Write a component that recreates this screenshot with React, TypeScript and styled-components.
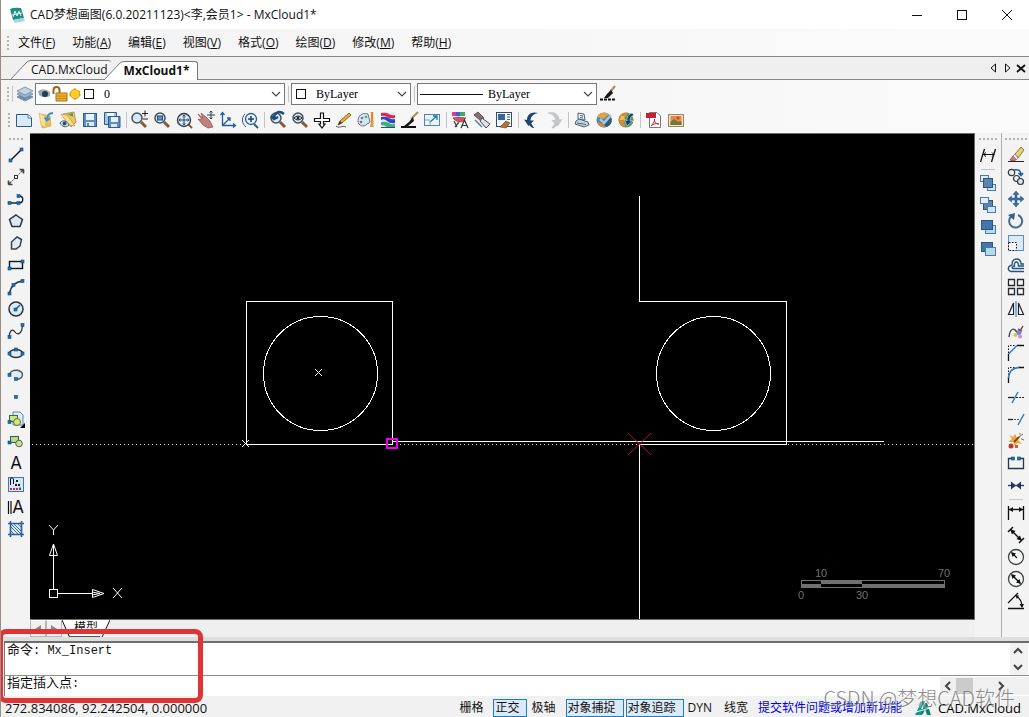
import React from "react";
import styled, { createGlobalStyle, css } from "styled-components";

const UI_FONT = '"Open Sans", "Noto Sans CJK SC", sans-serif';
const CODE_FONT = '"Liberation Mono", "Noto Sans CJK SC", monospace';

const GlobalStyle = createGlobalStyle`
  * { box-sizing: border-box; }
  body { margin: 0; font-family: ${UI_FONT}; font-size: 12px; color: #111; background: #f3f3f3; }
  button, input, select { font: inherit; color: inherit; margin: 0; }
`;

/* ---------- frame ---------- */

const Window = styled.div`
  position: relative;
  display: flex;
  flex-direction: column;
  min-height: 100vh;
  border-left: 1px solid #9c8c88;
  background: #f3f3f3;
  overflow: hidden;
`;

const TitleBar = styled.header`
  display: flex;
  align-items: center;
  height: 29px;
  padding-left: 8px;
  background: #fff;
`;

const Title = styled.h1`
  flex: 1;
  margin: 0 0 2px 5px;
  font-size: 12px;
  font-weight: 400;
  white-space: nowrap;
`;

const WindowButton = styled.button`
  display: flex;
  align-items: center;
  justify-content: center;
  width: 45px;
  height: 28px;
  padding: 0;
  border: 0;
  background: none;
`;

const MenuBar = styled.nav`
  display: flex;
  align-items: center;
  gap: 9px;
  height: 27px;
  padding-left: 6px;
  background: linear-gradient(90deg, #f3f3f3, #fbfbfb);
`;

const MenuList = styled.div`
  display: flex;
  gap: 17px;
`;

const MenuButton = styled.button`
  padding: 0;
  border: 0;
  background: none;
  line-height: 18px;
  white-space: nowrap;
`;

const Grip = styled.span<{ $horizontal?: boolean; $size: number }>`
  flex: none;
  ${(p) =>
    p.$horizontal
      ? css`
          width: ${p.$size}px;
          height: 2px;
          background: repeating-linear-gradient(90deg, #b4b4b4 0 2px, transparent 2px 4px);
        `
      : css`
          width: 2px;
          height: ${p.$size}px;
          background: repeating-linear-gradient(180deg, #b4b4b4 0 2px, transparent 2px 4px);
        `}
`;

/* ---------- document tabs ---------- */

const TabBar = styled.div`
  display: flex;
  align-items: flex-end;
  height: 24px;
  padding-left: 10px;
  border-top: 1px solid #868686;
  border-bottom: 1px solid #868686;
  background: #efefef;
`;

const Tab = styled.button<{ $active?: boolean }>`
  position: relative;
  display: flex;
  height: 19px;
  padding: 0;
  border: 0;
  background: none;
  line-height: 18px;
  white-space: nowrap;
  font-weight: ${(p) => (p.$active ? 700 : 400)};
  margin-left: ${(p) => (p.$active ? "-7px" : "0")};
  margin-bottom: ${(p) => (p.$active ? "-1px" : "0")};
`;

const TabLabel = styled.span<{ $active?: boolean }>`
  height: 100%;
  padding-right: ${(p) => (p.$active ? "8px" : "3px")};
  border-top: 1px solid #777;
  border-right: ${(p) => (p.$active ? "1px solid #777" : "0")};
  border-top-right-radius: 3px;
  background: ${(p) => (p.$active ? "#fff" : "#f4f4f4")};
`;

const TabControls = styled.div`
  display: flex;
  align-items: center;
  align-self: center;
  margin-left: auto;
  margin-right: 1px;
`;

const TinyButton = styled.button`
  display: flex;
  align-items: center;
  justify-content: center;
  width: 14px;
  height: 16px;
  padding: 0;
  border: 0;
  background: none;
`;

/* ---------- tool bars ---------- */

const PropertyBar = styled.div`
  display: flex;
  align-items: center;
  height: 28px;
  padding-left: 6px;
  background: linear-gradient(90deg, #f3f3f3, #fafafa);
`;

const Combo = styled.div<{ $width: number }>`
  position: relative;
  display: flex;
  align-items: center;
  width: ${(p) => p.$width}px;
  height: 22px;
  border: 1px solid #777;
  background: #fff;
`;

const ComboSelect = styled.select<{ $indent: number }>`
  appearance: none;
  width: 100%;
  height: 20px;
  padding: 0 20px 0 ${(p) => p.$indent}px;
  border: 0;
  background: none;
  font-family: "Liberation Serif", serif;
  font-size: 12px;
  color: #000;
`;

const ComboDecor = styled.span`
  position: absolute;
  inset: 0;
  display: flex;
  align-items: center;
  padding: 0 3px 0 1px;
  pointer-events: none;
  svg:last-child { margin-left: auto; }
`;

const ToolBar = styled.div`
  display: flex;
  align-items: center;
  height: 25px;
  padding: 0 0 2px 7px;
  background: linear-gradient(90deg, #f3f3f3, #fafafa);
`;

const ToolColumn = styled.div<{ $width: number; $line?: boolean }>`
  display: flex;
  flex-direction: column;
  align-items: center;
  flex: none;
  width: ${(p) => p.$width}px;
  padding-top: 5px;
  border-left: ${(p) => (p.$line ? "1px solid #b0b0b0" : "0")};
`;

const ToolButton = styled.button`
  display: flex;
  flex: none;
  align-items: center;
  justify-content: center;
  width: 22px;
  height: 22px;
  padding: 0;
  border: 0;
  background: none;
`;

const Divider = styled.span<{ $horizontal?: boolean }>`
  flex: none;
  ${(p) =>
    p.$horizontal
      ? css`width: 14px; height: 6px; background: linear-gradient(#c4c4c4, #c4c4c4) center / 100% 1px no-repeat;`
      : css`width: 6px; height: 16px; background: linear-gradient(#c4c4c4, #c4c4c4) center / 1px 100% no-repeat;`}
`;

const ColumnStart = styled.div`
  display: flex;
  align-items: flex-start;
  height: 6px;
`;

const Workspace = styled.main`
  display: flex;
  flex: 1;
`;

const Center = styled.div`
  display: flex;
  flex: 1;
  flex-direction: column;
  min-width: 0;
`;

const Canvas = styled.svg`
  display: block;
  flex: 1;
  width: 100%;
  min-height: 484px;
  background: #000;
`;

const CanvasFrame = styled.div`
  display: flex;
  flex: 1;
  border: solid #6c6c6c;
  border-width: 1px 1px 1px 0;
`;

const ModelStrip = styled.div`
  display: flex;
  height: 17px;
  background: #efefef;
`;

const ModelArrow = styled.button`
  display: flex;
  align-items: center;
  justify-content: center;
  width: 16px;
  padding: 0;
  border: 1px solid #b5b5b5;
  border-top-color: #fff;
  background: #f0f0f0;
`;

const ModelTab = styled.button`
  display: flex;
  padding: 0;
  border: 0;
  background: none;
  line-height: 16px;
`;

const ModelLabel = styled.span`
  padding: 0 2px 0 4px;
  background: #fff;
  border-bottom: 1px solid #555;
`;

/* ---------- command line ---------- */

const CommandPanel = styled.section`
  position: relative;
  padding-left: 3px;
  border-top: 4px solid #dedede;
  background: #f0f0f0;
  font-family: ${CODE_FONT};
  font-size: 13px;
`;

const History = styled.div`
  display: flex;
  justify-content: space-between;
  height: 35px;
  border-top: 2px solid #6e6e6e;
  border-left: 1px solid #777;
  border-bottom: 1px solid #8e8e8e;
  background: #fff;
`;

const HistoryText = styled.output`
  padding-left: 2px;
  line-height: 15px;
  white-space: pre;
`;

const Latin = styled.span`
  font-size: 12px;
`;

const ScrollColumn = styled.div`
  display: flex;
  flex-direction: column;
  justify-content: space-around;
  width: 18px;
  margin-right: 1px;
  background: #f2f2f2;
`;

const ScrollButton = styled.button`
  display: flex;
  align-items: center;
  justify-content: center;
  width: 16px;
  height: 14px;
  padding: 0;
  border: 0;
  background: none;
`;

const PromptRow = styled.div`
  display: flex;
  align-items: center;
  height: 20px;
  border-left: 1px solid #777;
  background: #fff;
`;

const Prompt = styled.label`
  padding: 0 0 4px 2px;
  line-height: 16px;
  white-space: nowrap;
`;

const PromptInput = styled.input`
  flex: 1;
  min-width: 0;
  height: 18px;
  padding: 0;
  border: 0;
  outline: 0;
  background: none;
`;

const ScrollRow = styled.div`
  display: flex;
  align-items: center;
  width: 89px;
  height: 18px;
  background: #f0f0f0;
`;

const ScrollThumb = styled.span`
  width: 17px;
  height: 16px;
  margin-right: 20px;
  background: #cbcbcb;
`;

const Highlight = styled.div`
  position: absolute;
  left: -3px;
  top: -12px;
  width: 205px;
  height: 74px;
  border: 5px solid #e03434;
  border-radius: 8px;
  pointer-events: none;
`;

/* ---------- status bar ---------- */

const StatusBar = styled.footer`
  display: flex;
  align-items: center;
  height: 21px;
  padding: 3px 8px 0 4px;
  background: #f1f1f1;
`;

const Coordinates = styled.span`
  flex: 1;
  font-size: 13px;
  line-height: 16px;
  white-space: nowrap;
`;

const Toggles = styled.div`
  display: flex;
  gap: 2px;
`;

const Toggle = styled.button<{ $on?: boolean }>`
  height: 18px;
  padding: 0 7px 0 1px;
  border: 1px solid ${(p) => (p.$on ? "#1a7fc8" : "transparent")};
  background: ${(p) => (p.$on ? "#dbeaf6" : "none")};
  line-height: 16px;
  white-space: nowrap;
`;

const FeedbackLink = styled.a`
  margin: 0 13px 0 2px;
  line-height: 16px;
  color: #0000d8;
  text-decoration: none;
  white-space: nowrap;
`;

const Brand = styled.span`
  margin-left: 7px;
  font-size: 13px;
  line-height: 16px;
  color: #000;
`;

const Watermark = styled.div`
  position: absolute;
  right: 14px;
  bottom: 6px;
  font-family: "Noto Sans CJK SC", sans-serif;
  font-size: 20px;
  font-weight: 300;
  line-height: 26px;
  color: rgba(110, 110, 110, 0.8);
  text-shadow: 1px 1px 0 rgba(255, 255, 255, 0.4);
  white-space: nowrap;
  pointer-events: none;
`;

/* ---------- icons ---------- */

const K = "#1c2126";
const B = "#1f5f9f";

const Node = ({ x, y }: { x: number; y: number }) => (
  <rect x={x - 1.5} y={y - 1.5} width="3" height="3" fill="#1c72b8" stroke="#0c4a80" strokeWidth=".6" />
);

const Lens = ({ children, x = 8, y = 8 }: { children?: React.ReactNode; x?: number; y?: number }) => (
  <>
    <path d={`M${x + 4} ${y + 4}L${x + 9} ${y + 9}`} stroke="#8a5a35" strokeWidth="3" />
    <circle cx={x} cy={y} r="5" fill="#d6e9f7" stroke="#44525e" strokeWidth="1.5" />
    {children}
  </>
);

const icons: Record<string, React.ReactNode> = {
  layers: (
    <g stroke="#6a86a3" strokeWidth=".8">
      <path d="M10 9L18 13L10 17L2 13Z" fill="#6f8eae" />
      <path d="M10 6L18 10L10 14L2 10Z" fill="#9db4ca" />
      <path d="M10 3L18 7L10 11L2 7Z" fill="#c4d3e0" />
    </g>
  ),
  newFile: (
    <>
      <path d="M2.500 4.500H14L17.500 8V16.500H2.500Z" fill="#d9ebf9" stroke="#2e5c8a" />
      <path d="M14 4.500V8H17.500" fill="#fff" stroke="#2e5c8a" strokeWidth=".8" />
    </>
  ),
  open: (
    <>
      <path d="M5 4L14 6L15 16L6 18Z" fill="#e9bf58" stroke="#c99d3c" strokeWidth=".6" />
      <path d="M3 3L9 6L10 18L5 15Z" fill="#f8e0a0" stroke="#d4ac50" strokeWidth=".6" />
      <path d="M17 3C12 3 11 6 11 10M8.500 7.500L11 10.500L14 8" stroke="#4090c8" strokeWidth="1.800" fill="none" />
    </>
  ),
  folderView: (
    <>
      <path d="M5 4L16 2L18 12L13 17Z" fill="#edc65a" stroke="#a77d20" strokeWidth=".7" />
      <path d="M3 4L9 5L17 16L11 15Z" fill="#f7df93" stroke="#b18b3b" strokeWidth=".6" />
      <path d="M2 13C5 9 9 11 11 15C8 18 4 17 2 13Z" fill="#e8eef2" stroke="#3b5468" />
      <circle cx="6.500" cy="13.500" r="2" fill="#2d4f6c" />
      <path d="M9 4L15 3L15 7Z" fill="#5ba363" />
    </>
  ),
  save: (
    <>
      <rect x="3.500" y="3.500" width="13" height="13" fill="#5b8fc6" stroke="#2c5b90" />
      <rect x="6" y="4" width="8" height="6" fill="#e8f2fa" />
      <rect x="6" y="12" width="8" height="4" fill="#dce8f2" />
      <path d="M8 13V16" stroke="#35679a" strokeWidth="1.500" />
    </>
  ),
  saveAll: (
    <>
      <path d="M2.500 2.500H14.500V14.500H2.500Z" fill="#a5c4e2" stroke="#2c5b90" />
      <rect x="5" y="3" width="7" height="3" fill="#f4f9fd" />
      <path d="M6.500 6.500H18V17.500H6.500Z" fill="#5b8fc6" stroke="#2c5b90" />
      <rect x="9" y="7" width="7" height="5" fill="#e8f2fa" />
      <rect x="9" y="14" width="6" height="3" fill="#dce8f2" />
    </>
  ),
  zoomRealtime: (
    <Lens x={7}>
      <path d="M12 3.500H18M15 .5V6.500M13 9H18" stroke={K} fill="none" />
    </Lens>
  ),
  zoomWindow: (
    <Lens>
      <rect x="5.500" y="6" width="5" height="4" fill="#5d93c6" stroke="#234f80" />
    </Lens>
  ),
  zoomAll: (
    <>
      <path d="M14 14L18 18" stroke="#8a5a35" strokeWidth="2" />
      <circle cx="10" cy="10" r="6.500" fill="#dcebf7" stroke="#333b44" strokeWidth="1.400" />
      <path d="M10 5V15M5 10H15M8.500 6.500L10 5L11.500 6.500M8.500 13.500L10 15L11.500 13.500M6.500 8.500L5 10L6.500 11.500M13.500 8.500L15 10L13.500 11.500" stroke="#1d4470" fill="none" />
    </>
  ),
  pan: (
    <>
      <path d="M2 4L7 8L5 3L10 7L14 11L17 17L12 18L7 15L2 9L6 10Z" fill="#bf7f7a" stroke="#8c4f4c" strokeWidth=".7" />
      <path d="M15 1V9M11 5H19M13.500 2.500L15 1L16.500 2.500M13.500 7.500L15 9L16.500 7.500" stroke="#263b52" fill="none" />
    </>
  ),
  ucs: (
    <path d="M4.500 3V15.500H17M4.500 15.500L12 8M2.500 5L4.500 2.500L6.500 5M15 13.500L17.500 15.500L15 17.500M12 11V8H9" stroke={B} strokeWidth="1.300" fill="none" />
  ),
  zoomPlus: (
    <>
      <path d="M14 14L18 18" stroke="#2e5c8a" strokeWidth="2" />
      <circle cx="11" cy="9" r="5.500" fill="#e7f1f9" stroke="#2e5c8a" strokeWidth="1.300" />
      <path d="M11 6V12M8 9H14" stroke="#1b3f6b" strokeWidth="1.500" />
      <path d="M5 4C1 8 2 14 6 17" stroke="#2e5c8a" fill="none" />
    </>
  ),
  zoomPrev: (
    <Lens>
      <path d="M16 4C11 0 6 3 6 8M3 6L6 9L10 7" stroke="#214b78" strokeWidth="2.500" fill="none" />
    </Lens>
  ),
  zoomObject: (
    <Lens>
      <path d="M4 8Q8 4 12 8Q8 12 4 8Z" fill="#fff" stroke={K} />
      <circle cx="8" cy="8" r="1.500" fill={K} />
    </Lens>
  ),
  cross: (
    <path d="M8.500 8.500V3H11.500V8.500H17.500V11.500H11.500V14H13L10 18L7 14H8.500V11.500H2.500V8.500Z" fill="#fff" stroke="#111" strokeWidth="1.200" />
  ),
  pencil: (
    <>
      <path d="M4 15L6 11L15 3L17 5L8 13Z" fill="#e7b23a" stroke="#6d4a12" strokeWidth=".8" />
      <path d="M2 16C5 19 8 15 12 17" stroke="#555" fill="none" />
      <path d="M4 15L6 11L8 13Z" fill="#333" />
    </>
  ),
  palette: (
    <>
      <path d="M12 4C6 2 2 6 2 11C2 16 8 17 10 15C11 13 13 14 14 12Z" fill="#d5e4ef" stroke="#5c7c96" />
      <circle cx="6" cy="8" r="1.300" fill="#3f8ed0" />
      <circle cx="10" cy="7" r="1.300" fill="#58ad4d" />
      <circle cx="5" cy="12" r="1.300" fill="#d65244" />
      <path d="M16 2V12" stroke="#e08a2e" strokeWidth="2.500" />
      <path d="M15 11H17.500V17H14Z" fill="#d99a52" />
    </>
  ),
  colors: (
    <>
      <rect x="3" y="2" width="14" height="16" fill="#e4edf6" />
      <path d="M3 3Q8 2 11 4T17 5V8Q12 9 9 7T3 6Z" fill="#e2284a" />
      <path d="M3 7Q8 6 11 8T17 9V13Q12 14 9 11T3 10Z" fill="#2b45d0" />
      <path d="M3 12Q8 11 11 13T17 14V17H9Q6 15 3 15Z" fill="#43b06b" />
      <path d="M3 17.500H17" stroke="#274a92" />
    </>
  ),
  brush: (
    <>
      <path d="M18 2L11 9" stroke="#b08a55" strokeWidth="2" />
      <path d="M13 7L9 12L4 16H8L14 11Z" fill="#171717" />
      <path d="M1 17H16" stroke="#111" strokeWidth="2" />
    </>
  ),
  brushDots: (
    <>
      <path d="M17 2L12 8" stroke="#b08a55" strokeWidth="2" />
      <path d="M13 6L9 10L6 14H10L15 9Z" fill="#171717" />
      <path d="M2 15.500H18" stroke="#111" strokeWidth="2" strokeDasharray="3 1" />
    </>
  ),
  resize: (
    <>
      <rect x="2.500" y="4.500" width="15" height="11" fill="#e9f4fb" stroke="#5484a8" />
      <path d="M8 12L15 6M11 6H15V10" stroke="#1b78b8" strokeWidth="1.300" fill="none" />
      <path d="M3 10H8V15" stroke="#8cacc4" fill="none" />
    </>
  ),
  match: (
    <>
      <rect x="2" y="2" width="4" height="4" fill="#da3c98" />
      <rect x="6" y="2" width="4" height="4" fill="#3a62d0" />
      <rect x="10" y="2" width="5" height="4" fill="#43aa61" />
      <path d="M3 8L8 7L16 8L12 12L6 11Z" fill="#d05656" stroke="#7c2d2d" strokeWidth=".6" />
      <path d="M4 11L7 17M9 12L5 17" stroke="#3a4652" strokeWidth="1.300" />
      <path d="M11 18L14.500 10L18 18M12 15.500H17" stroke="#333" fill="none" strokeWidth="1.200" />
    </>
  ),
  hammer: (
    <>
      <path d="M2 5L6 2L12 8L9 11Z" fill="#8b6f68" stroke="#4a3a38" strokeWidth=".8" />
      <path d="M10 8L18 14L14 18L8 11Z" fill="#dbe2e8" stroke="#434e58" />
      <path d="M3 10L10 17" stroke="#4b79a4" strokeWidth="1.400" />
    </>
  ),
  layout: (
    <>
      <rect x="2.500" y="2.500" width="15" height="14" fill="#f5f9fc" stroke="#2d4e70" />
      <rect x="4" y="4" width="7" height="6" fill="#35679a" />
      <path d="M13 4.500H16M13 7H16M13 9.500H16" stroke="#35679a" />
      <path d="M6 17L12 11L16 13L12 18Z" fill="#b56f32" stroke="#6b3d17" strokeWidth=".6" />
    </>
  ),
  undo: (
    <path d="M16 3C9 1 5 5 5 10L2 9.500L6.500 16L12 10.500L8.500 10.500C8.500 7 11 4 16 3ZM6.500 13C8 17 10 18 12 18L9 13Z" fill="#1c4672" />
  ),
  redo: (
    <path d="M4 3C11 1 15 5 15 10L18 9.500L13.500 16L8 10.500L11.500 10.500C11.500 7 9 4 4 3ZM13.500 13C12 17 10 18 8 18L11 13Z" fill="#c5c9cd" stroke="#b2b6ba" strokeWidth=".5" />
  ),
  print: (
    <g fill="#eef3f7" stroke="#4a627a">
      <path d="M6 3L12 4L13 10L6 9Z" />
      <path d="M4 11L7 9L16 12L17 15L12 17L3 14Z" fill="#c7d3df" />
      <path d="M8 5.500L11 6M8 7.500L11 8M5 13L14 14.500" />
    </g>
  ),
  globe1: (
    <>
      <circle cx="10" cy="10" r="7.500" fill="#3a86bd" />
      <path d="M3 7C5 2 11 2 15 4L10 9L6 8Z" fill="#e0a43c" />
      <path d="M12 17C17 16 19 11 17 7L12 12L9 10L6 13Z" fill="#2e5a78" />
      <path d="M6 9L10 13L17 5" stroke="#a8c6dd" strokeWidth="2.600" fill="none" />
      <path d="M3 12C5 17 10 18 12 17L8 13Z" fill="#d08a3c" />
    </>
  ),
  globe2: (
    <>
      <circle cx="10" cy="10" r="7.500" fill="#4c9a50" />
      <path d="M3 7C5 3 8 2 12 3L8 10L9 17C4 16 2 12 3 7Z" fill="#d38a3c" />
      <path d="M16 3C11 5 11 8 11 11L8 9L11 16L17 11L14 11C14 8 15 6 18 5Z" fill="#173f68" stroke="#e5ecf1" strokeWidth=".6" />
      <path d="M5 6L9 6L7 10L4 10Z" fill="#f1c14c" />
    </>
  ),
  pdf: (
    <>
      <path d="M5.500 2.500H13L16.500 6V17.500H5.500Z" fill="#fff" stroke="#777" />
      <rect x="2" y="3" width="10" height="5" fill="#c8202e" />
      <path d="M7 16C10 13 11 10 10.500 9C10 13 13 14 15 14C12 13 9 14 7 16" stroke="#c8202e" fill="none" />
    </>
  ),
  image: (
    <>
      <rect x="2.500" y="4.500" width="15" height="12" fill="#f1e3c8" stroke="#9c8468" />
      <rect x="4.500" y="6" width="11" height="9" fill="#e98a4a" />
      <path d="M4.500 15V12L8 9L12 12L14 11L15.500 12V15Z" fill="#6d7a38" />
      <circle cx="12" cy="8" r="1.500" fill="#e43a2e" />
    </>
  ),
  line: (
    <>
      <path d="M4.500 15.500L15.500 4.500" stroke="#111" strokeWidth="1.500" />
      <Node x={4.5} y={15.5} />
      <Node x={15.5} y={4.5} />
    </>
  ),
  xline: (
    <>
      <path d="M4 16L16 4" stroke="#555" strokeDasharray="2 1" />
      <path d="M2.500 17.500V13.500M2.500 17.500H6.500M17.500 2.500V6.500M17.500 2.500H13.500" stroke="#444" strokeWidth="1.600" />
      <path d="M2.500 17.500L5 15M17.500 2.500L15 5" stroke="#444" strokeWidth="1.600" />
      <rect x="8.500" y="8.500" width="3" height="3" fill="#fff" stroke="#333" />
    </>
  ),
  polyline: (
    <>
      <path d="M3 14H13C18 14 18 7 13 7" stroke="#222" strokeWidth="1.400" fill="none" />
      <Node x={3.5} y={14} />
      <Node x={12.5} y={14} />
      <Node x={12.5} y={7} />
    </>
  ),
  polygon: <path d="M10 4L16.500 8.500L14 15.500H6L3.500 8.500Z" fill="#dce8f0" stroke="#2b333a" strokeWidth="1.500" />,
  freePolygon: <path d="M11 4L15.500 6.500L14 13L10 16H5.500V9Z" fill="#e4ebef" stroke="#3c444b" strokeWidth="1.500" />,
  rect: (
    <>
      <rect x="3.500" y="6.500" width="13" height="7" fill="#e4edf5" stroke="#151515" strokeWidth="1.400" />
      <Node x={3.5} y={13.5} />
      <Node x={16.5} y={6.5} />
    </>
  ),
  arc: (
    <>
      <path d="M3.500 17Q5 5 17 4" stroke="#333" strokeWidth="1.300" fill="none" />
      <Node x={3.5} y={16.5} />
      <Node x={7.5} y={8} />
      <Node x={16.5} y={4} />
    </>
  ),
  circle: (
    <>
      <circle cx="10" cy="10" r="7" fill="#dcebf4" stroke="#2b3238" strokeWidth="1.500" />
      <path d="M10 10L14 6" stroke={B} strokeWidth="1.500" />
      <Node x={9.5} y={10.5} />
    </>
  ),
  spline: (
    <>
      <path d="M3 16C4 8 7 8 9 11S16 14 16.500 4" stroke="#333" strokeWidth="1.300" fill="none" />
      <Node x={3.5} y={16} />
      <Node x={16.5} y={4} />
    </>
  ),
  ellipse: (
    <>
      <ellipse cx="10" cy="10.500" rx="6.500" ry="4" fill="#dfeaf2" stroke="#2e373f" strokeWidth="1.500" />
      <Node x={3.5} y={10.5} />
      <Node x={16.5} y={10.5} />
      <Node x={10} y={6.5} />
    </>
  ),
  ellipseArc: (
    <>
      <path d="M3.500 10C4 3.500 17 4 16.500 10C16 14 12 14.500 10 14" fill="#dfeaf2" stroke="#4a545d" strokeWidth="1.400" />
      <Node x={3.5} y={10} />
      <Node x={10} y={14} />
    </>
  ),
  point: <Node x={10} y={10} />,
  block: (
    <>
      <path d="M7 3H14L17 6V16H7Z" fill="#dcebf7" stroke="#5b86b0" />
      <rect x="3.500" y="6.500" width="8" height="6" fill="#cbe58b" stroke="#416a3a" />
      <circle cx="11" cy="13" r="3.500" fill="#d6e87a" stroke="#5d7434" />
      <Node x={3.5} y={13} />
      <path d="M19 14V19H14Z" fill="#000" />
    </>
  ),
  insert: (
    <>
      <rect x="4.500" y="5.500" width="8" height="6" fill="#bcd992" stroke="#39603a" />
      <circle cx="13" cy="12.500" r="3.300" fill="#c9dda3" stroke="#4e6a3b" />
      <Node x={3.5} y={11.5} />
    </>
  ),
  mtext: <text x="10" y="16" textAnchor="middle" fontFamily="Inter, sans-serif" fontSize="17" fill="#111">A</text>,
  attribute: (
    <>
      <rect x="2.500" y="2.500" width="15" height="14" fill="#d6e6f4" stroke="#4275a5" />
      <path d="M4.500 10V3.500Q7.500 2 7.500 5V9" stroke="#111" fill="none" />
      <path d="M10 5h2v2h-2zM9 9h2v2h-2zM12 9h2v2h-2z" fill="#222" />
      <path d="M4 13h2v2h-2zM7 13h2v2h-2zM10 13h2v2h-2z" fill="#d3264a" />
      <path d="M13 12.500h2v2.500h-2z" fill="#315c92" />
    </>
  ),
  attText: (
    <>
      <path d="M2.500 4V17M5 4V17" stroke="#111" strokeWidth="1.200" />
      <text x="12" y="16" textAnchor="middle" fontFamily="Inter, sans-serif" fontSize="17" fill="#111">A</text>
    </>
  ),
  hatch: (
    <>
      <rect x="5" y="5" width="10" height="10" fill="#dceafa" />
      <path d="M5 8L12 15M5 12L8 15M8 5L15 12M12 5L15 8M5 5L15 15" stroke="#3a6da2" />
      <path d="M4.500 2V18M15.500 2V18M2 4.500H18M2 15.500H18" stroke="#2c6096" strokeWidth="1.600" />
    </>
  ),
  dimEdit: (
    <>
      <path d="M6.500 4L2.500 17M17.500 4L13.500 17" stroke="#111" strokeWidth="1.300" />
      <path d="M5 9.500H16M8 7.500L5.500 9.500L8 11.500M14 7.500L16 9.500L14 11.500" stroke="#111" fill="none" />
    </>
  ),
  erase: (
    <>
      <path d="M2 16.500H18" stroke="#222" />
      <path d="M9 9L15 2L18 5L12 13Z" fill="#ecd16a" stroke="#6e5b20" strokeWidth=".8" />
      <path d="M7 11L11 14L8 16L4 15Z" fill="#e2747b" stroke="#8c3b43" strokeWidth=".8" />
      <path d="M9 9L12 13L10.500 14.500L7 11Z" fill="#eef3f6" stroke="#667" strokeWidth=".6" />
    </>
  ),
  copy: (
    <>
      <circle cx="5.500" cy="5.500" r="3.200" fill="#e9eef2" stroke="#30373e" strokeWidth="1.200" />
      <circle cx="10.500" cy="11.500" r="3" fill="#e9eef2" stroke="#30373e" strokeWidth="1.200" />
      <circle cx="14.500" cy="14.500" r="3" fill="#dfe6ec" stroke="#30373e" strokeWidth="1.200" />
      <path d="M8 3C13 2 15 4 15 8M12.500 6L15 8.500L17 6" stroke={B} strokeWidth="1.600" fill="none" />
    </>
  ),
  move: (
    <path d="M10 2L13 5.500H11V9H14.500V7L18 10L14.500 13V11H11V14.500H13L10 18L7 14.500H9V11H5.500V13L2 10L5.500 7V9H9V5.500H7Z" fill="#386fa5" stroke="#28507a" strokeWidth=".5" />
  ),
  rotate: (
    <>
      <path d="M12 4A6.500 6.500 0 1 1 5 5.500" stroke="#456b91" strokeWidth="2" fill="none" />
      <path d="M2 4L9 2L8 9Z" fill="#2f608f" />
    </>
  ),
  scale: (
    <>
      <rect x="2.500" y="2.500" width="15" height="15" fill="#dceaf8" stroke="#5b8fc4" />
      <path d="M3 9.500H10.500V17M2.500 9.500V17.500H10.500" stroke="#111" strokeDasharray="1.500 1.500" fill="#f4f8fc" />
    </>
  ),
  offset: (
    <path d="M18 16.500H5Q1 15.500 3 11.500L6 10Q6 4 10.500 4Q15 4 15 9H18M18 13.500H7Q5 12.500 8.500 11Q8 7 10.500 7Q12.500 7 12.500 11H18" stroke="#25557e" strokeWidth="1.400" fill="none" />
  ),
  array: (
    <path d="M2.500 2.500H8.500V8.500H2.500ZM11.500 2.500H17.500V8.500H11.500ZM2.500 11.500H8.500V17.500H2.500ZM11.500 11.500H17.500V17.500H11.500Z" fill="#f7fafc" stroke="#252b30" strokeWidth="1.300" />
  ),
  mirror: (
    <>
      <path d="M7.500 4V15.500H2.500Z" fill="#fff" stroke="#222" strokeWidth="1.200" />
      <path d="M12.500 4V15.500H17.500Z" fill="#fff" stroke="#222" strokeWidth="1.200" />
      <path d="M10 2V18" stroke="#3685c4" strokeWidth="1.200" />
    </>
  ),
  editSpline: (
    <>
      <path d="M3 16C4 7 8 7 10 10S14 10 17 5" stroke="#444" strokeWidth="1.400" fill="none" />
      <circle cx="9.500" cy="14" r="2" fill="#e9c23d" />
      <circle cx="13" cy="11.500" r="2.500" fill="#5d8fe0" />
      <circle cx="14" cy="15.500" r="2" fill="#d98bd0" />
      <path d="M12 8L16 10" stroke="#c23c3c" strokeWidth="1.500" />
    </>
  ),
  chamfer: (
    <>
      <path d="M2.500 10V2.500H10" stroke="#111" strokeDasharray="1.500 1.500" fill="none" />
      <path d="M2.500 18V11M11 2.500H18" stroke="#111" strokeWidth="1.300" />
      <path d="M2.500 11L11 2.500" stroke="#327bc0" strokeWidth="1.500" />
    </>
  ),
  fillet: (
    <>
      <path d="M2.500 10V2.500H10" stroke="#111" strokeDasharray="1.500 1.500" fill="none" />
      <path d="M2.500 18V12M12 2.500H18" stroke="#111" strokeWidth="1.300" />
      <path d="M2.500 13Q3 3 13 2.500" stroke="#327bc0" strokeWidth="1.600" fill="none" />
    </>
  ),
  trim: (
    <>
      <path d="M2 10.500H8" stroke="#222" strokeWidth="1.300" />
      <path d="M10 10.500H18" stroke="#222" strokeDasharray="2 1" />
      <path d="M6 16L12 5" stroke="#2b7fc1" strokeWidth="1.500" />
    </>
  ),
  extend: (
    <>
      <path d="M2 10.500H7" stroke="#222" strokeWidth="1.300" />
      <path d="M8 10.500H14" stroke="#2b5f93" strokeDasharray="2 1" />
      <path d="M12 16L18 5" stroke="#2b7fc1" strokeWidth="1.500" />
    </>
  ),
  explode: (
    <>
      <path d="M3 4L7 6L9 3L11 7L15 5L12 9L16 13L11 12L9 15L7 11L2 11L6 8Z" fill="#e5aa3b" />
      <circle cx="5" cy="15" r="2.500" fill="#c92e2e" />
      <path d="M8 11L13 6" stroke="#92362c" strokeWidth="1.800" />
      <path d="M13 6L17 3M15 8L18 9M14 4V2" stroke="#777" />
      <path d="M9 14H12V17H9Z" fill="#dc5a32" />
    </>
  ),
  breakAt: (
    <>
      <path d="M6 5.500H2.500V15.500H17.500V5.500H14" fill="none" stroke="#26394b" strokeWidth="1.300" />
      <Node x={7} y={5.5} />
      <Node x={13} y={5.5} />
    </>
  ),
  join: (
    <>
      <path d="M2 10.500H18" stroke="#1f3958" strokeWidth="1.300" />
      <path d="M5 6.500L10 10.500L5 14.500ZM15 6.500L10 10.500L15 14.500Z" fill="#1f3958" />
    </>
  ),
  dimLinear: (
    <>
      <path d="M2.500 3V17M17.500 3V17" stroke="#111" strokeWidth="1.300" />
      <path d="M3 6.500H17" stroke="#111" strokeWidth="1.400" />
      <path d="M3 6.500L7 4V9ZM17 6.500L13 4V9Z" fill="#111" />
    </>
  ),
  dimAligned: (
    <>
      <path d="M2 7L7 2M13 18L18 13" stroke="#111" strokeWidth="1.500" />
      <path d="M5 5L15 15" stroke="#111" strokeWidth="1.300" />
      <path d="M4 4L9.500 6L6 9.500ZM16 16L10.500 14L14 10.500Z" fill="#111" />
    </>
  ),
  dimRadius: (
    <>
      <circle cx="10" cy="10" r="7.500" fill="#f5f7f8" stroke="#444" strokeWidth="1.300" />
      <path d="M6 6L11 11" stroke="#111" strokeWidth="1.300" />
      <path d="M5 5L10 6.500L6.500 10Z" fill="#111" />
    </>
  ),
  dimDiameter: (
    <>
      <circle cx="10" cy="10" r="7.500" fill="#f5f7f8" stroke="#444" strokeWidth="1.300" />
      <path d="M6 6L14 14" stroke="#111" strokeWidth="1.300" />
      <path d="M5 5L10 6.500L6.500 10ZM15 15L10 13.500L13.500 10Z" fill="#111" />
    </>
  ),
  dimAngle: (
    <>
      <path d="M2 17.500H18" stroke="#111" strokeWidth="1.500" />
      <path d="M2 12L12 2" stroke="#111" strokeWidth="1.200" />
      <path d="M10 5Q16 8 16 16" stroke="#111" strokeWidth="1.200" fill="none" />
      <path d="M9 4L13 4.500L11 8ZM16 17L13.500 13H18Z" fill="#111" />
    </>
  ),
};

const orderIcon = (front: number) => {
  const back = <rect key="b" x="2.500" y="2.500" width="8" height="6" fill="#e4edf6" stroke="#4a7cab" />;
  const low = <rect key="l" x="9.500" y="11.500" width="8" height="6" fill="#cfe6f2" stroke="#4a7cab" />;
  const mid = <rect key="m" x="5.500" y="5.500" width="9" height="9" fill="#5a85b3" stroke="#2a5682" />;
  const big = <rect key="g" x="3.500" y="3.500" width="11" height="9" fill="#4576a9" stroke="#2a5682" />;
  const small = <rect key="s" x="7.500" y="8.500" width="10" height="8" fill="#b9d9ea" stroke="#4a7cab" />;
  return [[back, low, mid], [mid, back, low], [small, big], [big, small]][front];
};
icons.orderFront = orderIcon(0);
icons.orderBack = orderIcon(1);
icons.orderAbove = orderIcon(2);
icons.orderUnder = orderIcon(3);

const Icon = ({ name }: { name: string }) => (
  <svg width="20" height="20" viewBox="0 0 20 20" fill="none" aria-hidden="true">
    {icons[name]}
  </svg>
);

const Tool = ({ name }: { name: string }) => (
  <ToolButton type="button" aria-label={name}>
    <Icon name={name} />
  </ToolButton>
);

const Chevron = ({ dir, size = 10, bold }: { dir: "up" | "down" | "left" | "right"; size?: number; bold?: boolean }) => {
  const d = { down: "M1 3L5 7L9 3", up: "M1 7L5 3L9 7", left: "M7 1L3 5L7 9", right: "M3 1L7 5L3 9" }[dir];
  return (
    <svg width={size} height={size} viewBox="0 0 10 10" fill="none" aria-hidden="true">
      <path d={d} stroke="#444" strokeWidth={bold ? 2 : 1.1} />
    </svg>
  );
};

const Logo = ({ boxed }: { boxed?: boolean }) => (
  <svg width="16" height="16" viewBox="0 0 16 16" aria-hidden="true">
    {boxed ? (
      <>
        <path d="M1 2Q5 0 12 1L15 11L4 13Z" fill="#1d8f84" />
        <path d="M4 13L15 11L16 14L6 16Z" fill="#a9d3ea" />
        <path d="M4 10L6 4L8 9L10 4L12 9M3 8L13 6" stroke="#d9f2ee" fill="none" />
      </>
    ) : (
      <>
        <path d="M7 1L10 1L6 9H9L7 15H0L3 9Z" fill="#11988a" />
        <path d="M10 3L12 3L16 15H12L10 9L8 14H6Z" fill="#0c8175" />
        <path d="M1 12L15 8" stroke="#e6f7f3" />
      </>
    )}
  </svg>
);

/* ---------- data ---------- */

const menus = [
  ["文件", "F"], ["功能", "A"], ["编辑", "E"], ["视图", "V"],
  ["格式", "O"], ["绘图", "D"], ["修改", "M"], ["帮助", "H"],
];

const mainTools = [
  ["newFile", "open", "folderView", "save", "saveAll"],
  ["zoomRealtime", "zoomWindow", "zoomAll", "pan", "ucs", "zoomPlus"],
  ["zoomPrev", "zoomObject", "cross", "pencil", "palette", "colors", "brush", "resize"],
  ["match", "hammer", "layout"],
  ["undo", "redo"],
  ["print", "globe1", "globe2"],
  ["pdf", "image"],
];

const drawTools = [
  "line", "xline", "polyline", "polygon", "freePolygon", "rect", "arc", "circle", "spline",
  "ellipse", "ellipseArc", "point", "block", "insert", "mtext", "attribute", "attText", "hatch",
];

const orderTools = ["orderFront", "orderBack", "orderAbove", "orderUnder"];

const modifyTools = [
  "erase", "copy", "move", "rotate", "scale", "offset", "array", "mirror", "editSpline",
  "chamfer", "fillet", "trim", "extend", "explode", "breakAt", "join",
];

const dimTools = ["dimLinear", "dimAligned", "dimRadius", "dimDiameter", "dimAngle"];

const toggles: [string, boolean][] = [
  ["栅格", false], ["正交", true], ["极轴", false], ["对象捕捉", true],
  ["对象追踪", true], ["DYN", false], ["线宽", false],
];

/* ---------- sections ---------- */

const TabSlant = ({ fill }: { fill: string }) => (
  <svg width="20" height="19" viewBox="0 0 20 19" aria-hidden="true">
    <path d="M0 19L15 3Q17 .5 20 .5V19Z" fill={fill} />
    <path d="M0 19L15 3Q17 .5 20 .5" fill="none" stroke="#777" />
  </svg>
);

const Drawing = () => (
  <CanvasFrame>
    <Canvas role="img" aria-label="drawing">
      <line x1="2" x2="100%" y1="310.500" y2="310.500" stroke="#ddd" strokeDasharray="1 3" />
      <g stroke="#fff" fill="none" shapeRendering="crispEdges">
        <rect x="216.500" y="167.500" width="146" height="143" />
        <circle cx="290.500" cy="239.500" r="57" />
        <path d="M609.500 62V167.500H756.500V310.500H609.500" />
        <circle cx="683.500" cy="239.500" r="57" />
        <path d="M362 307.500H854" />
        <line x1="609.500" x2="609.500" y1="310" y2="100%" />
        <path d="M23.500 422V455M28 459.500H62" />
        <rect x="19.500" y="455.500" width="8" height="8" />
      </g>
      <g stroke="#fff" fill="none">
        <path d="M285 235L292 242M292 235L285 242M212 306L219 313M219 306L212 313" />
        <path d="M23.500 410L27.500 421.500H19.500ZM23.500 410V421M62.500 455.500V463.500L74 459.500ZM62 458L70 459.500L62 461" />
        <path d="M83 454L92 464M92 454L83 464M19 391L23.500 396L28 391M23.500 396V401" />
      </g>
      <path d="M598 299L621 321M621 299L598 321" stroke="#c01818" />
      <rect x="357" y="305" width="10" height="9" fill="none" stroke="#f000f0" strokeWidth="2" />
      <g shapeRendering="crispEdges">
        <rect x="771.500" y="446.500" width="143" height="7" fill="none" stroke="#707070" />
        <path d="M771 450H791V454H771ZM791 446H832V450H791ZM832 450H915V454H832Z" fill="#707070" />
      </g>
      <g fill="#707070" fontFamily='"Liberation Sans", sans-serif' fontSize="11" textAnchor="middle">
        <text x="791" y="443">10</text>
        <text x="914" y="443">70</text>
        <text x="771" y="465">0</text>
        <text x="832" y="465">30</text>
      </g>
    </Canvas>
  </CanvasFrame>
);

const ComboBox = ({ label, value, width, indent, children }: {
  label: string; value: string; width: number; indent: number; children: React.ReactNode;
}) => (
  <Combo $width={width}>
    <ComboSelect aria-label={label} $indent={indent} defaultValue={value}>
      <option value={value}>{value}</option>
    </ComboSelect>
    <ComboDecor>
      {children}
      <Chevron dir="down" />
    </ComboDecor>
  </Combo>
);

export default function App() {
  return (
    <>
      <GlobalStyle />
      <Window>
        <TitleBar>
          <Logo boxed />
          <Title>CAD梦想画图(6.0.20211123)&lt;李,会员1&gt; - MxCloud1*</Title>
          <WindowButton type="button" aria-label="Minimize">
            <svg width="12" height="12"><path d="M1 6.500H11" stroke="#111" /></svg>
          </WindowButton>
          <WindowButton type="button" aria-label="Maximize">
            <svg width="12" height="12"><rect x="1.500" y="1.500" width="9" height="9" fill="none" stroke="#111" /></svg>
          </WindowButton>
          <WindowButton type="button" aria-label="Close">
            <svg width="12" height="12"><path d="M1 1L11 11M11 1L1 11" stroke="#111" /></svg>
          </WindowButton>
        </TitleBar>

        <MenuBar>
          <Grip $size={14} />
          <MenuList>
            {menus.map(([text, key]) => (
              <MenuButton type="button" key={key}>
                {text}(<u>{key}</u>)
              </MenuButton>
            ))}
          </MenuList>
        </MenuBar>

        <TabBar>
          <Tab type="button">
            <TabSlant fill="#f4f4f4" />
            <TabLabel>CAD.MxCloud</TabLabel>
          </Tab>
          <Tab type="button" $active>
            <TabSlant fill="#fff" />
            <TabLabel $active>MxCloud1*</TabLabel>
          </Tab>
          <TabControls>
            <TinyButton type="button" aria-label="Previous tab">
              <svg width="10" height="10"><path d="M7.500 1V9L3 5Z" fill="none" stroke="#111" /></svg>
            </TinyButton>
            <TinyButton type="button" aria-label="Next tab">
              <svg width="10" height="10"><path d="M3.500 1V9L8 5Z" fill="none" stroke="#111" /></svg>
            </TinyButton>
            <TinyButton type="button" aria-label="Close tab">
              <svg width="10" height="10"><path d="M1 2L9 9M9 2L1 9" stroke="#111" strokeWidth="1.800" /></svg>
            </TinyButton>
          </TabControls>
        </TabBar>

        <PropertyBar>
          <Grip $size={14} />
          <Divider />
          <Icon name="layers" />
          <ComboBox label="Layer" value="0" width={250} indent={68}>
            <svg width="62" height="18" viewBox="0 0 62 18" aria-hidden="true">
              <path d="M1 6Q7 2 13 7L13 11Q6 14 2 10Z" fill="#9aa9b5" />
              <circle cx="8" cy="9" r="3" fill="#223d58" />
              <path d="M16.500 9V5Q16.500 2 19.500 2T22.500 5V8" fill="none" stroke="#8d6a1f" strokeWidth="2" />
              <path d="M19 8H30V16H19Z" fill="#f0b02e" stroke="#a77518" />
              <path d="M19 11H30M19 13.500H30" stroke="#a77518" strokeWidth=".7" />
              <path d="M38 3L40 5L43 6L43 9L44 10L41 13L38 15L35 13L32 10L33 7L35 5Z" fill="#e89c17" />
              <circle cx="38" cy="9" r="4" fill="#ffd028" />
              <rect x="47.500" y="4.500" width="9" height="9" fill="#fff" stroke="#111" />
            </svg>
          </ComboBox>
          <Divider />
          <ComboBox label="Color" value="ByLayer" width={120} indent={24}>
            <svg width="16" height="18" aria-hidden="true"><rect x="3.500" y="4.500" width="9" height="9" fill="#fff" stroke="#111" /></svg>
          </ComboBox>
          <Divider />
          <ComboBox label="Linetype" value="ByLayer" width={180} indent={70}>
            <svg width="65" height="18" aria-hidden="true"><path d="M1 9.500H64" stroke="#111" /></svg>
          </ComboBox>
          <Tool name="brushDots" />
        </PropertyBar>

        <ToolBar>
          <Grip $size={14} />
          <span>&nbsp;</span>
          {mainTools.map((group, i) => (
            <React.Fragment key={i}>
              {i > 0 && <Divider />}
              {group.map((name) => <Tool key={name} name={name} />)}
            </React.Fragment>
          ))}
        </ToolBar>

        <Workspace>
          <ToolColumn $width={29}>
            <ColumnStart><Grip $horizontal $size={14} /></ColumnStart>
            {drawTools.map((name) => <Tool key={name} name={name} />)}
          </ToolColumn>
          <Center>
            <Drawing />
            <ModelStrip>
              <ModelArrow type="button" aria-label="Scroll left">
                <svg width="8" height="10"><path d="M7 1V9L1 5Z" fill="#888" /></svg>
              </ModelArrow>
              <ModelArrow type="button" aria-label="Scroll right">
                <svg width="8" height="10"><path d="M1 1V9L7 5Z" fill="#888" /></svg>
              </ModelArrow>
              <ModelTab type="button">
                <svg width="8" height="17"><path d="M0 0L8 17V0Z" fill="#fff" /><path d="M0 0L7.500 17" stroke="#111" /></svg>
                <ModelLabel>模型</ModelLabel>
                <svg width="10" height="17"><path d="M10 0L2 17H0V0Z" fill="#fff" /><path d="M10 0L2 17" stroke="#111" /></svg>
              </ModelTab>
            </ModelStrip>
          </Center>
          <ToolColumn $width={26}>
            <ColumnStart><Grip $horizontal $size={18} /></ColumnStart>
            <Tool name="dimEdit" />
            <Divider $horizontal />
            {orderTools.map((name) => <Tool key={name} name={name} />)}
          </ToolColumn>
          <ToolColumn $width={28} $line>
            <ColumnStart><Grip $horizontal $size={22} /></ColumnStart>
            {modifyTools.map((name) => <Tool key={name} name={name} />)}
            <Divider $horizontal />
            {dimTools.map((name) => <Tool key={name} name={name} />)}
          </ToolColumn>
        </Workspace>

        <CommandPanel>
          <History>
            <HistoryText>命令<Latin>: Mx_Insert</Latin></HistoryText>
            <ScrollColumn>
              <ScrollButton type="button" aria-label="Scroll up"><Chevron dir="up" bold /></ScrollButton>
              <ScrollButton type="button" aria-label="Scroll down"><Chevron dir="down" bold /></ScrollButton>
            </ScrollColumn>
          </History>
          <PromptRow>
            <Prompt htmlFor="command">指定插入点<Latin>:</Latin></Prompt>
            <PromptInput id="command" type="text" autoComplete="off" />
            <ScrollRow>
              <ScrollButton type="button" aria-label="Scroll left"><Chevron dir="left" bold /></ScrollButton>
              <ScrollThumb />
              <ScrollButton type="button" aria-label="Scroll right"><Chevron dir="right" bold /></ScrollButton>
            </ScrollRow>
          </PromptRow>
          <Highlight />
        </CommandPanel>

        <StatusBar>
          <Coordinates>272.834086, 92.242504, 0.000000</Coordinates>
          <Toggles>
            {toggles.map(([text, on]) => (
              <Toggle key={text} type="button" $on={on} aria-pressed={on}>{text}</Toggle>
            ))}
          </Toggles>
          <FeedbackLink href="#feedback">提交软件问题或增加新功能</FeedbackLink>
          <Logo />
          <Brand>CAD.MxCloud</Brand>
        </StatusBar>
        <Watermark>CSDN @梦想CAD软件</Watermark>
      </Window>
    </>
  );
}
